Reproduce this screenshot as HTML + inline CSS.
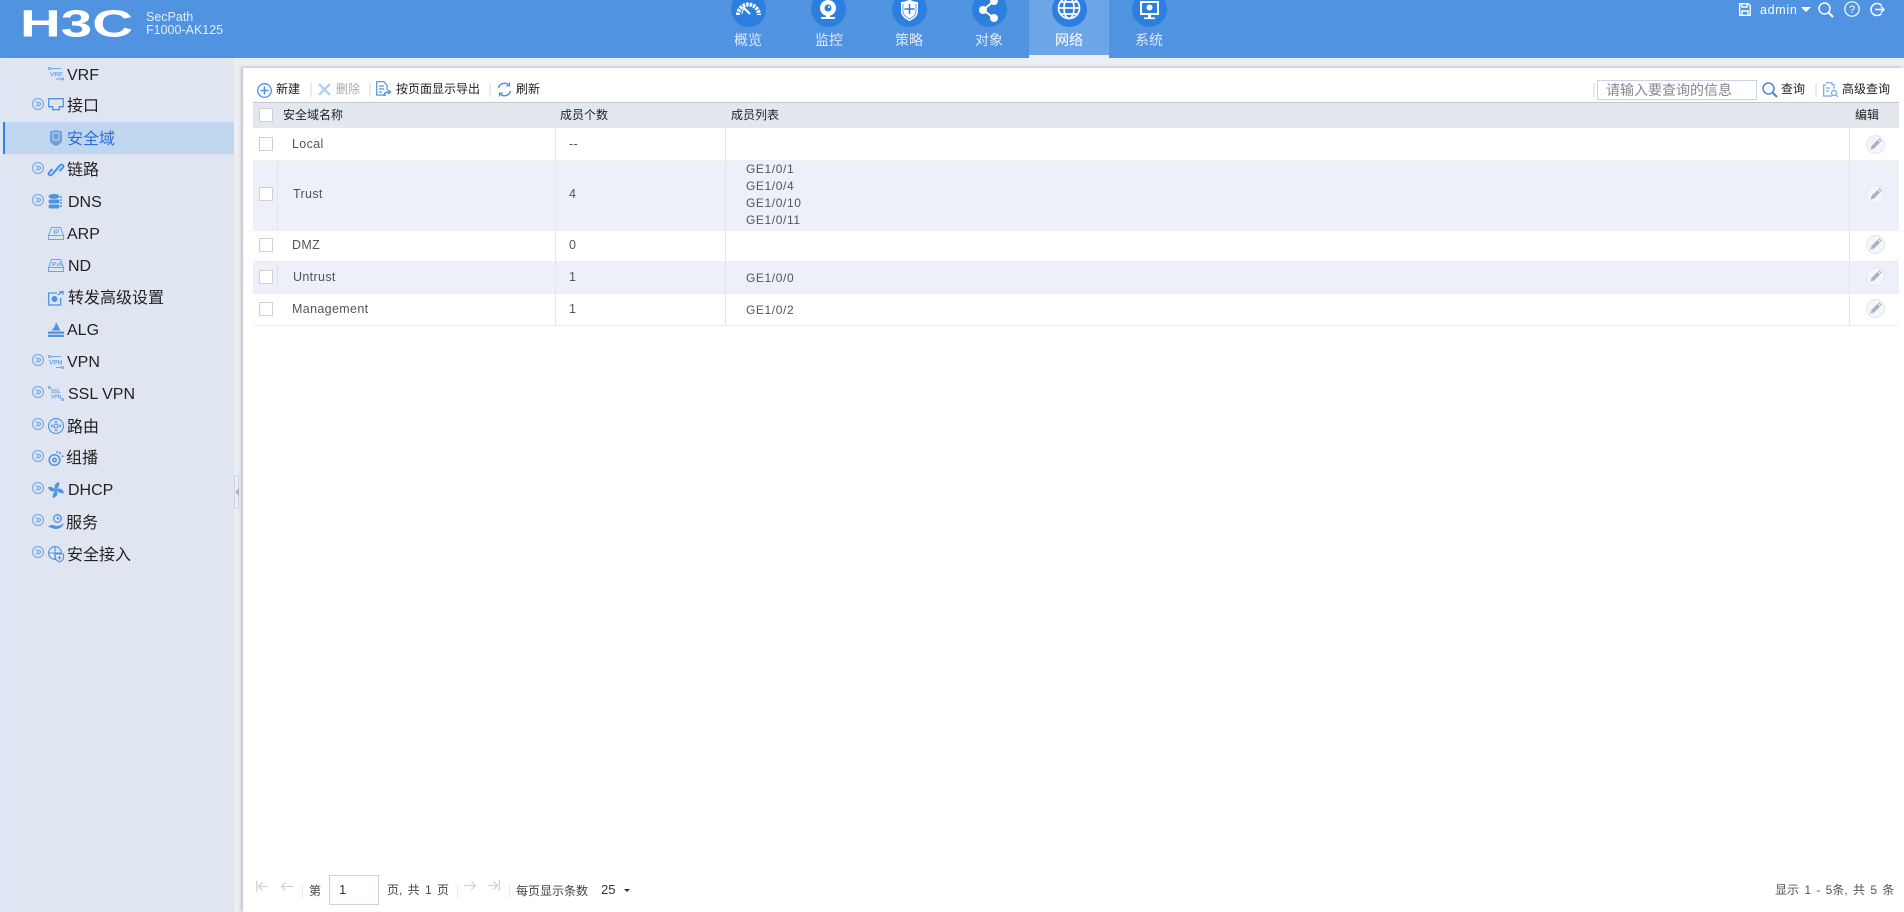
<!DOCTYPE html>
<html lang="zh"><head><meta charset="utf-8"><title>安全域</title>
<style>
html,body{margin:0;padding:0}
body{width:1904px;height:912px;position:relative;overflow:hidden;background:#fff;font-family:"Liberation Sans","Noto Sans CJK SC",sans-serif;font-size:12px;color:#222}
div,span,svg{position:absolute;display:block}
svg{overflow:visible}
.t{line-height:20px;white-space:nowrap}
.n{font-size:16px;color:#222;left:67px;line-height:24px;white-space:nowrap;margin-top:1px}
.nl{font-size:14px;color:#dfeaf8;line-height:20px;top:30px;width:80px;text-align:center}
.c{width:35px;height:35px;border-radius:50%;background:#2d7fdf;top:-8px}
.b{width:12px;height:12px;border:1px solid #d0d0d0;background:#fff;box-sizing:content-box;left:259px}
.d{font-size:12.5px;color:#555;line-height:20px;white-space:nowrap;letter-spacing:.35px}
.v{background:#e3e5ea;width:1px}
.h{background:#eceef2;height:1px;left:253px;width:1646px}
.sep{width:2px;height:14px;background:#e9ebef}
.e{width:19px;height:19px;border-radius:50%;border:1px solid #e4e7f0;background:#f3f5f9;left:1866px;box-sizing:border-box}
</style></head><body>

<div style="left:0;top:0;width:1904px;height:58px;background:#5093e1"></div>
<svg style="left:20px;top:8px" width="114" height="30" viewBox="0 0 114 30"><text x="0" y="28.500" font-family="Liberation Sans" font-weight="bold" font-size="38" fill="#fff" textLength="113" lengthAdjust="spacingAndGlyphs">H3C</text></svg>
<div class="t" style="left:146px;top:7px;color:#e4eefa;font-size:12.500px">SecPath</div>
<div class="t" style="left:146px;top:20px;color:#e4eefa;font-size:12.500px">F1000-AK125</div>

<div style="left:1029px;top:0;width:80px;height:58px;background:#6ca6e6"></div>
<div style="left:1029px;top:55px;width:80px;height:3px;background:#eaf1fa"></div>
<div class="c" style="left:731px"></div><div class="c" style="left:811px"></div><div class="c" style="left:892px"></div><div class="c" style="left:972px"></div><div class="c" style="left:1052px"></div><div class="c" style="left:1132px"></div>
<svg style="left:731px;top:-8px" width="35" height="35" viewBox="0 0 35 35" fill="none" stroke="#fff"><path d="M7 23a10.500 10.500 0 1 1 21 0" stroke-width="4" stroke-dasharray="2.500 1"/><path d="M12 15l7 7" stroke-width="2"/><path d="M11 22a7 7 0 0 1 2-5" stroke-width="1"/></svg>
<svg style="left:811px;top:-8px" width="35" height="35" viewBox="0 0 35 35"><circle cx="17" cy="16" r="8" fill="#fff"/><circle cx="17" cy="16" r="3.500" fill="#2d7fdf"/><circle cx="18" cy="15" r="1" fill="#fff"/><rect x="15" y="23" width="4" height="2" fill="#fff"/><rect x="10" y="25" width="14" height="2" fill="#fff"/></svg>
<svg style="left:892px;top:-8px" width="35" height="35" viewBox="0 0 35 35"><path d="M9 10c3 0 6-1 8.500-2.500C20 9 23 10 26 10v9c0 5-4 8-8.500 10C13 27 9 24 9 19z" fill="#fff"/><path d="M11 12v7c0 4 3 6 6.500 8 3.500-2 6.500-4 6.500-8v-7" fill="none" stroke="#2d7fdf" stroke-width=".7"/><path d="M17.500 12v10M12.500 17h10" stroke="#2d7fdf" stroke-width="1.500"/></svg>
<svg style="left:972px;top:-8px" width="35" height="35" viewBox="0 0 35 35" fill="#fff"><circle cx="11" cy="18" r="4"/><circle cx="22" cy="9" r="4"/><circle cx="22" cy="26" r="4"/><path d="M11 18L22 9M11 18l11 8" stroke="#fff" stroke-width="2"/></svg>
<svg style="left:1052px;top:-8px" width="35" height="35" viewBox="0 0 35 35" fill="none" stroke="#fff" stroke-width="1.700"><circle cx="17" cy="16" r="10.500"/><ellipse cx="17" cy="16" rx="5" ry="10.500"/><path d="M6.500 16h21M8.500 10h17M8.500 22h17"/></svg>
<svg style="left:1132px;top:-8px" width="35" height="35" viewBox="0 0 35 35"><rect x="9" y="10" width="17" height="12" fill="#2d7fdf" stroke="#fff" stroke-width="2"/><circle cx="17.500" cy="15.500" r="3" fill="#fff"/><rect x="16" y="23" width="3" height="3" fill="#fff"/><rect x="12" y="25.500" width="11" height="1.600" fill="#fff"/></svg>
<div class="nl" style="left:708px">概览</div><div class="nl" style="left:789px">监控</div><div class="nl" style="left:869px">策略</div><div class="nl" style="left:949px">对象</div><div class="nl" style="left:1029px;color:#fff">网络</div><div class="nl" style="left:1109px">系统</div>

<svg style="left:1739px;top:3px" width="12" height="13" viewBox="0 0 12 13" fill="none" stroke="#fff" stroke-width="1.400"><path d="M.7.7h8.500l2 2v9.600H.7z"/><path d="M3 1v3h5V1M3 12V8h6v4"/></svg>
<div class="t" style="left:1760px;top:0;color:#fff;font-size:12.500px;letter-spacing:.7px">admin</div>
<svg style="left:1801px;top:7px" width="10" height="5"><path d="M0 0h10L5 5z" fill="#fff"/></svg>
<svg style="left:1818px;top:2px" width="16" height="15" fill="none" stroke="#fff" stroke-width="1.500"><circle cx="6.500" cy="6.500" r="5.500"/><path d="M10.500 10.500L15 15" stroke-width="2"/></svg>
<svg style="left:1844px;top:1px" width="16" height="16" fill="none" stroke="#fff" stroke-width="1.200"><circle cx="8" cy="8" r="7.200"/><text x="8" y="12" font-size="11" font-family="Liberation Sans" fill="#fff" stroke="none" text-anchor="middle">?</text></svg>
<svg style="left:1869px;top:2px" width="16" height="15" fill="none" stroke="#fff" stroke-width="1.500"><path d="M12.500 3.500A6 6 0 1 0 12.500 11.500"/><path d="M6 7.500h9M12 4.500l3 3-3 3"/></svg>

<div style="left:0;top:58px;width:3px;height:854px;background:#dce8f6"></div>
<div style="left:3px;top:58px;width:231px;height:854px;background:#dfe5f1"></div>
<div style="left:234px;top:58px;width:1670px;height:854px;background:#eceef4"></div>
<div style="left:3px;top:122px;width:231px;height:32px;background:#c0d5ee"></div>
<div style="left:3px;top:122px;width:2px;height:32px;background:#2d7fe0"></div>

<div style="left:234px;top:475px;width:5px;height:34px;border:1px solid #d0d5ea;box-sizing:border-box"></div>
<svg style="left:235px;top:488px" width="4" height="8"><path d="M4 0v8L0 4z" fill="#aeb2ba"/></svg>

<div style="left:243px;top:68px;width:1661px;height:844px;background:#fff;box-shadow:-2px -1px 3px #bfc2c8"></div>

<div class="n" style="top:63px">VRF</div>
<div class="n" style="top:94px">接口</div>
<div class="n" style="top:127px;color:#2a6fd9">安全域</div>
<div class="n" style="top:158px">链路</div>
<div class="n" style="top:190px;left:68px">DNS</div>
<div class="n" style="top:222px">ARP</div>
<div class="n" style="top:254px;left:68px">ND</div>
<div class="n" style="top:286px;left:68px">转发高级设置</div>
<div class="n" style="top:318px">ALG</div>
<div class="n" style="top:350px">VPN</div>
<div class="n" style="top:382px;left:68px">SSL VPN</div>
<div class="n" style="top:415px">路由</div>
<div class="n" style="top:446px;left:66px">组播</div>
<div class="n" style="top:478px;left:68px">DHCP</div>
<div class="n" style="top:511px;left:66px">服务</div>
<div class="n" style="top:543px">安全接入</div>

<svg width="0" height="0"><defs><g id="x"><circle cx="6" cy="6" r="5.500" fill="none" stroke="#6ea5e6" stroke-width="1"/><path d="M4 3.500L6.500 6 4 8.500M6.500 3.500L9 6 6.500 8.500" fill="none" stroke="#6ea5e6" stroke-width="1"/></g></defs></svg>
<svg style="left:32px;top:98px" width="12" height="12"><use href="#x"/></svg>
<svg style="left:32px;top:162px" width="12" height="12"><use href="#x"/></svg>
<svg style="left:32px;top:194px" width="12" height="12"><use href="#x"/></svg>
<svg style="left:32px;top:354px" width="12" height="12"><use href="#x"/></svg>
<svg style="left:32px;top:386px" width="12" height="12"><use href="#x"/></svg>
<svg style="left:32px;top:418px" width="12" height="12"><use href="#x"/></svg>
<svg style="left:32px;top:450px" width="12" height="12"><use href="#x"/></svg>
<svg style="left:32px;top:482px" width="12" height="12"><use href="#x"/></svg>
<svg style="left:32px;top:514px" width="12" height="12"><use href="#x"/></svg>
<svg style="left:32px;top:546px" width="12" height="12"><use href="#x"/></svg>

<svg style="left:48px;top:67px" width="16" height="14" fill="none" stroke="#6ea5e6"><circle cx="1.500" cy="1.500" r="1"/><circle cx="14.500" cy="12" r="1"/><path d="M3 1.500h10M8 12h5"/><text x="2" y="9.500" font-size="6.500" font-family="Liberation Sans" font-weight="bold" fill="#6ea5e6" stroke="none">VRF</text></svg>
<svg style="left:48px;top:98px" width="16" height="13" fill="none" stroke="#4f93e0" stroke-width="1.300"><path d="M.7.7h14.600v8h-4v3H4.700v-3h-4z"/></svg>
<svg style="left:50px;top:130px" width="12" height="16"><path d="M0 1.500L6 0l6 1.500V10c0 3-3 5-6 6-3-1-6-3-6-6z" fill="#6e9fd8"/><path d="M3 3h6v7H3z" fill="none" stroke="#c0d5ee"/></svg>
<svg style="left:48px;top:162px" width="16" height="16" fill="none" stroke="#4f93e0" stroke-width="2"><path d="M7 9.500l-3.500 3.500a1.800 1.800 0 0 1-2.500-2.500L4.500 7M9 6.500L12.500 3a1.800 1.800 0 0 1 2.500 2.500L11.500 9M5.500 10.500l5-5"/></svg>
<svg style="left:48px;top:194px" width="16" height="15"><ellipse cx="6" cy="2.500" rx="5.500" ry="2.500" fill="#4f93e0"/><rect x=".5" y="5.500" width="11" height="4" rx="2" fill="#4f93e0"/><rect x=".5" y="10.500" width="11" height="4" rx="2" fill="#4f93e0"/><path d="M13 2v11" stroke="#4f93e0" stroke-width="1.500" stroke-dasharray="2 1"/></svg>
<svg style="left:48px;top:227px" width="16" height="13" fill="none" stroke="#6ea5e6"><path d="M3.500.5h9l3 8v4H.5v-4z"/><path d="M.5 8.500h15"/><text x="5.500" y="7" font-size="6" font-family="Liberation Sans" font-weight="bold" fill="#6ea5e6" stroke="none">IP</text></svg>
<svg style="left:48px;top:259px" width="16" height="13" fill="none" stroke="#6ea5e6"><path d="M3.500.5h9l3 8v4H.5v-4z"/><path d="M.5 8.500h15"/><text x="3.500" y="7" font-size="5" font-family="Liberation Sans" font-weight="bold" fill="#6ea5e6" stroke="none">IPv6</text></svg>
<svg style="left:48px;top:291px" width="16" height="15" fill="none" stroke="#4f93e0" stroke-width="1.300"><path d="M9 2H.7v12h12V7"/><circle cx="6.500" cy="8" r="2.300" fill="#4f93e0"/><path d="M10 4l4-3M11.500.7H15v3"/></svg>
<svg style="left:48px;top:322px" width="16" height="15" fill="#4f93e0"><path d="M8 0c.5 2 2 2.500 2.500 5l2 3.500H3.500L6 5.500 7 4z"/><path d="M0 9.500h16v2.200H0zM0 12.800h16V15H0z"/></svg>
<svg style="left:48px;top:355px" width="16" height="14" fill="none" stroke="#6ea5e6"><circle cx="1.500" cy="1.500" r="1"/><circle cx="14.500" cy="12.500" r="1"/><path d="M3 1.500h10M8 12.500h5"/><text x="1" y="9.500" font-size="6.500" font-family="Liberation Sans" font-weight="bold" fill="#6ea5e6" stroke="none">VPN</text></svg>
<svg style="left:48px;top:386px" width="16" height="15" fill="none" stroke="#6ea5e6"><circle cx="1.500" cy="1.500" r="1"/><circle cx="14.500" cy="13.500" r="1"/><text x="3" y="7" font-size="5" font-family="Liberation Sans" font-weight="bold" fill="#6ea5e6" stroke="none">SSL</text><text x="3" y="12.500" font-size="5" font-family="Liberation Sans" font-weight="bold" fill="#6ea5e6" stroke="none">VPN</text></svg>
<svg style="left:48px;top:418px" width="16" height="16" fill="none" stroke="#4f93e0" stroke-width="1.100"><circle cx="8" cy="8" r="7.400"/><path d="M8 2.500l2 2H6zM8 13.500l2-2H6zM2.500 8l2 2V6zM13.500 8l-2 2V6z" fill="#4f93e0" stroke="none"/><circle cx="8" cy="8" r="2"/></svg>
<svg style="left:48px;top:450px" width="16" height="16" fill="none" stroke="#4f93e0" stroke-width="1.500"><circle cx="6.500" cy="10" r="5.300"/><circle cx="6.500" cy="10" r="1.800"/><path d="M9 1l.5 2M12.500 2l-1 2M15.500 6l-2 .5"/></svg>
<svg style="left:48px;top:482px" width="16" height="16" fill="#4f93e0"><path d="M8 8C5 5 7 1 11 0c1 3-1 6-3 8zM8 8c3-3 7-1 8 3-3 1-6-1-8-3zM8 8c3 3 1 7-3 8-1-3 1-6 3-8zM8 8C5 11 1 9 0 5c3-1 6 1 8 3z"/></svg>
<svg style="left:48px;top:514px" width="16" height="16" fill="none" stroke="#4f93e0" stroke-width="1.300"><circle cx="9.500" cy="4.500" r="3.800"/><path d="M9.500 2.500v2.200h2"/><path d="M0 13c3-3 5-2 8-1 3 0 5-1 8-3-1 4-5 6-8 6-3 0-5-2-8-2z" fill="#4f93e0" stroke="none"/></svg>
<svg style="left:48px;top:546px" width="16" height="16" fill="none" stroke="#4f93e0" stroke-width="1.100"><circle cx="7" cy="7" r="6.400"/><path d="M7 .7v12.600M1 7h12"/><path d="M7 8h8.500v4c0 2-2 3-4 4-2-1-4-2-4-4z" fill="#dfe5f1"/><path d="M11.500 10v3.500M9.700 11.800h3.600"/></svg>

<svg style="left:257px;top:83px" width="15" height="15" fill="none" stroke="#4f93e0" stroke-width="1.300"><circle cx="7.500" cy="7.500" r="6.800"/><path d="M7.500 3.500v8M3.500 7.500h8" stroke-width="1.600"/></svg>
<div class="t" style="left:276px;top:79px">新建</div>
<div class="sep" style="left:310px;top:83px"></div>
<svg style="left:318px;top:83px" width="13" height="13" stroke="#b4d0f0" stroke-width="2.500"><path d="M1 1l11 11M12 1L1 12"/></svg>
<div class="t" style="left:336px;top:79px;color:#aaa">删除</div>
<div class="sep" style="left:369px;top:83px"></div>
<svg style="left:376px;top:81px" width="15" height="16" fill="none" stroke="#4f93e0" stroke-width="1.200"><path d="M10 14H.7V.7h7l3.300 3.300v5"/><path d="M3 5h5M3 8h5M3 11h3"/><path d="M8 15c0-3 2-4 5-4M12 9l2.500 2L12 13" stroke-width="1.400"/></svg>
<div class="t" style="left:396px;top:79px">按页面显示导出</div>
<div class="sep" style="left:489px;top:83px"></div>
<svg style="left:497px;top:82px" width="15" height="15" fill="none" stroke="#4f93e0" stroke-width="1.500"><path d="M1.500 6A6 6 0 0 1 12 3.500M13.500 9A6 6 0 0 1 3 11.500"/><path d="M12.500.5v3.500H9M2.500 14.500V11H6" stroke-width="1"/></svg>
<div class="t" style="left:516px;top:79px">刷新</div>

<div class="sep" style="left:1593px;top:83px"></div>
<div style="left:1597px;top:80px;width:160px;height:20px;border:1px solid #c6d4e6;box-sizing:border-box"></div>
<div class="t" style="left:1606px;top:80px;color:#888;font-size:14px">请输入要查询的信息</div>
<svg style="left:1762px;top:82px" width="15" height="15" fill="none" stroke="#3f8ade" stroke-width="1.500"><circle cx="6.500" cy="6.500" r="5.500"/><path d="M10.500 10.500L15 15" stroke-width="2"/></svg>
<div class="t" style="left:1781px;top:79px">查询</div>
<div class="sep" style="left:1815px;top:83px"></div>
<svg style="left:1823px;top:82px" width="15" height="15" fill="none" stroke="#74a8e6" stroke-width="1.200"><path d="M3 .7h6v2H11v4M9 14H.7V3H3"/><path d="M3 6h4M3 9h3" /><circle cx="11" cy="11" r="2.500"/><path d="M13 13l2 2"/></svg>
<div class="t" style="left:1842px;top:79px">高级查询</div>

<div style="left:253px;top:102px;width:1646px;height:26px;background:#e2e8ee;border-top:1px solid #c4c6c9;box-sizing:border-box"></div>
<div class="b" style="top:108px"></div>
<div class="t" style="left:283px;top:105px">安全域名称</div>
<div class="t" style="left:560px;top:105px">成员个数</div>
<div class="t" style="left:731px;top:105px">成员列表</div>
<div class="t" style="left:1855px;top:105px">编辑</div>

<div style="left:253px;top:160px;width:1646px;height:70px;background:#edf0f8"></div>
<div style="left:253px;top:261px;width:1646px;height:33px;background:#edf0f8"></div>
<div class="h" style="top:160px"></div><div class="h" style="top:230px"></div><div class="h" style="top:261px"></div><div class="h" style="top:293px"></div><div class="h" style="top:325px"></div>
<div class="v" style="left:277px;top:160px;height:70px"></div>
<div class="v" style="left:277px;top:261px;height:32px"></div>
<div class="v" style="left:555px;top:128px;height:197px"></div>
<div class="v" style="left:725px;top:128px;height:197px"></div>
<div class="v" style="left:1849px;top:128px;height:197px"></div>

<div class="b" style="top:137px"></div><div class="b" style="top:187px"></div><div class="b" style="top:238px"></div><div class="b" style="top:270px"></div><div class="b" style="top:302px"></div>

<div class="d" style="left:292px;top:134px">Local</div>
<div class="d" style="left:293px;top:184px">Trust</div>
<div class="d" style="left:292px;top:235px">DMZ</div>
<div class="d" style="left:293px;top:267px">Untrust</div>
<div class="d" style="left:292px;top:299px">Management</div>
<div class="d" style="left:569px;top:134px">--</div>
<div class="d" style="left:569px;top:184px">4</div>
<div class="d" style="left:569px;top:235px">0</div>
<div class="d" style="left:569px;top:267px">1</div>
<div class="d" style="left:569px;top:299px">1</div>
<div class="d" style="left:746px;top:159px;font-size:12px;letter-spacing:.6px">GE1/0/1</div>
<div class="d" style="left:746px;top:176px;font-size:12px;letter-spacing:.6px">GE1/0/4</div>
<div class="d" style="left:746px;top:193px;font-size:12px;letter-spacing:.6px">GE1/0/10</div>
<div class="d" style="left:746px;top:210px;font-size:12px;letter-spacing:.6px">GE1/0/11</div>
<div class="d" style="left:746px;top:268px;font-size:12px;letter-spacing:.6px">GE1/0/0</div>
<div class="d" style="left:746px;top:300px;font-size:12px;letter-spacing:.6px">GE1/0/2</div>

<svg width="0" height="0"><defs><g id="p"><path d="M3.500 13.500l1-3.500 6-6 2.500 2.500-6 6z" fill="#a9afc6"/><path d="M11.300 3.200l1-1 2.500 2.500-1 1z" fill="#a9afc6"/></g></defs></svg>
<div class="e" style="top:135px"></div><svg style="left:1867px;top:136px" width="17" height="17"><use href="#p"/></svg>
<div class="e" style="top:185px"></div><svg style="left:1867px;top:186px" width="17" height="17"><use href="#p"/></svg>
<div class="e" style="top:235px"></div><svg style="left:1867px;top:236px" width="17" height="17"><use href="#p"/></svg>
<div class="e" style="top:267px"></div><svg style="left:1867px;top:268px" width="17" height="17"><use href="#p"/></svg>
<div class="e" style="top:299px"></div><svg style="left:1867px;top:300px" width="17" height="17"><use href="#p"/></svg>

<svg style="left:256px;top:881px" width="13" height="11" fill="none" stroke="#cfd2d8" stroke-width="1.300"><path d="M.7 0v11M12 5.500H2.500M6.500 1.500L2.500 5.500l4 4"/></svg>
<svg style="left:280px;top:881px" width="13" height="11" fill="none" stroke="#cfd2d8" stroke-width="1.300"><path d="M13 5.500H1.500M5.500 1.500L1.500 5.500l4 4"/></svg>
<div class="sep" style="left:302px;top:884px;width:1px"></div>
<div class="t" style="left:309px;top:881px;color:#444">第</div>
<div style="left:329px;top:875px;width:50px;height:30px;border:1px solid #c6d4e6;box-sizing:border-box"></div>
<div class="t" style="left:339px;top:880px;font-size:13px;color:#333">1</div>
<div class="t" style="left:387px;top:880px;color:#444;word-spacing:2px">页, 共 1 页</div>
<div class="sep" style="left:457px;top:884px;width:1px"></div>
<svg style="left:464px;top:880px" width="13" height="11" fill="none" stroke="#cfd2d8" stroke-width="1.300"><path d="M0 5.500h11.500M7.500 1.500l4 4-4 4"/></svg>
<svg style="left:487px;top:880px" width="13" height="11" fill="none" stroke="#cfd2d8" stroke-width="1.300"><path d="M12.300 0v11M1 5.500h9.500M6.500 1.500l4 4-4 4"/></svg>
<div class="sep" style="left:509px;top:884px;width:1px"></div>
<div class="t" style="left:516px;top:881px;color:#444">每页显示条数</div>
<div class="t" style="left:601px;top:880px;font-size:13px;color:#333">25</div>
<svg style="left:624px;top:889px" width="6" height="3"><path d="M0 0h6L3 3z" fill="#333"/></svg>
<div class="t" style="left:1775px;top:880px;color:#555;word-spacing:2px">显示 1 - 5条, 共 5 条</div>
</body></html>
